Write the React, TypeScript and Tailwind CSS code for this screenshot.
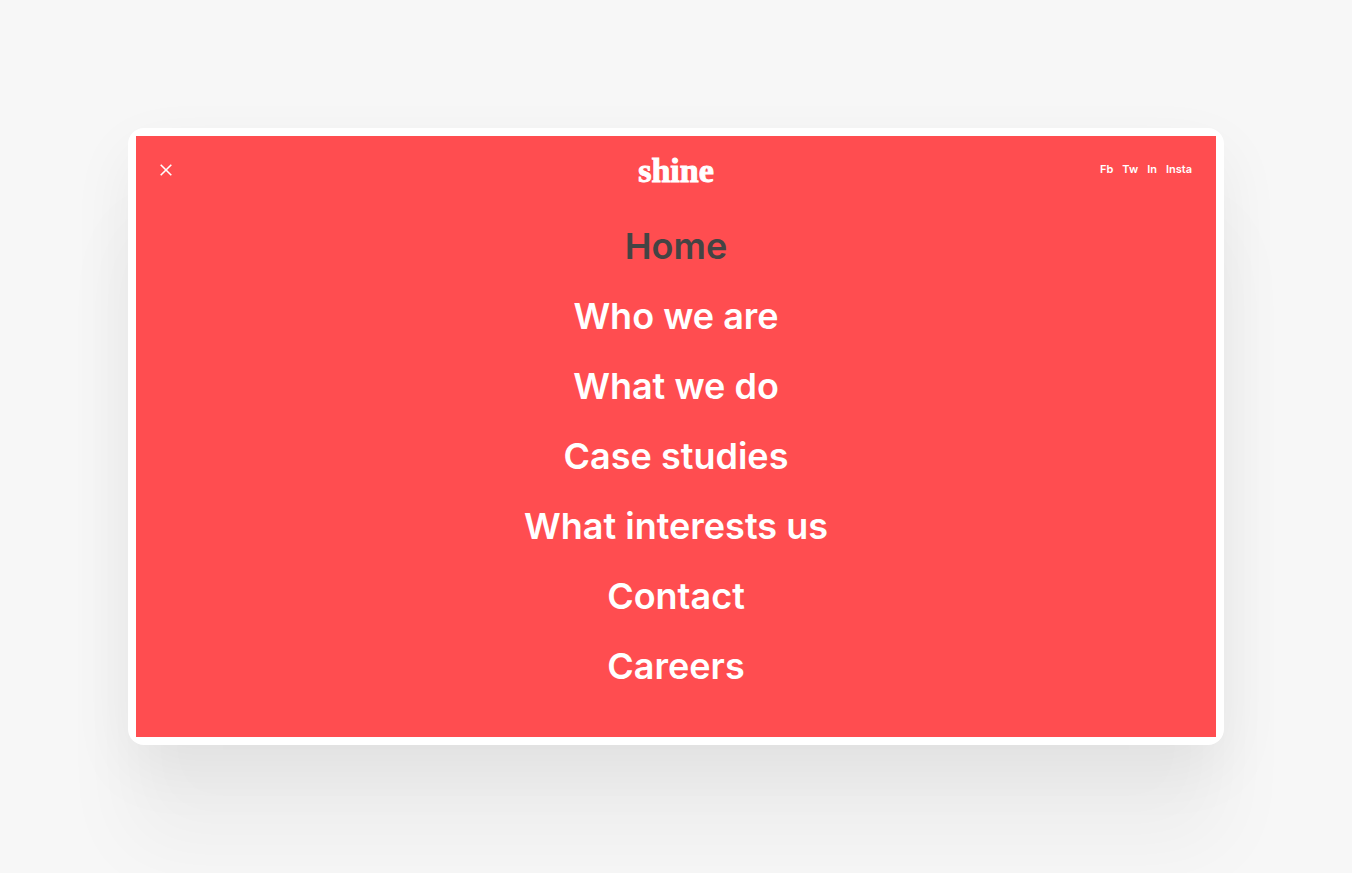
const NAV_LINKS = [
  { label: "Home", href: "#home", active: true },
  { label: "Who we are", href: "#who-we-are" },
  { label: "What we do", href: "#what-we-do" },
  { label: "Case studies", href: "#case-studies" },
  { label: "What interests us", href: "#interests" },
  { label: "Contact", href: "#contact" },
  { label: "Careers", href: "#careers" },
];

const SOCIAL_LINKS = ["Fb", "Tw", "In", "Insta"];

function CloseIcon() {
  return (
    <svg width="12" height="12" viewBox="0 0 12 12" fill="none" stroke="currentColor" strokeWidth="1.6" aria-hidden="true">
      <path d="M.7 .7l10.6 10.6M11.3 .7L.7 11.3" />
    </svg>
  );
}

function MenuHeader() {
  return (
    <header className="grid grid-cols-3 items-center px-6 pt-[15px]">
      <button type="button" aria-label="Close menu" className="justify-self-start pb-0.5 text-white">
        <CloseIcon />
      </button>
      <a
        href="#home"
        className="justify-self-center font-['Liberation_Serif',serif] text-[34px] leading-10 font-bold text-white [-webkit-text-stroke:1px_white]"
      >
        shine
      </a>
      <ul className="flex gap-[9px] justify-self-end pb-1 text-[11px] leading-4 font-semibold text-white">
        {SOCIAL_LINKS.map((label) => (
          <li key={label}>
            <a href={`#${label.toLowerCase()}`}>{label}</a>
          </li>
        ))}
      </ul>
    </header>
  );
}

export default function App() {
  return (
    <main className="min-h-screen bg-[#f7f7f7] p-32 font-['Inter',sans-serif]">
      <div className="rounded-2xl bg-white p-2 shadow-[0_100px_80px_rgba(0,0,0,0.04),0_24px_64px_rgba(0,0,0,0.06)]">
        <div className="bg-[#ff4d50] pb-9">
          <MenuHeader />
          <nav className="pt-5">
            <ul className="text-center text-4xl font-semibold">
              {NAV_LINKS.map((link) => (
                <li key={link.label} className="py-[15px]">
                  <a href={link.href} className={link.active ? "text-[#444444]" : "text-white"}>
                    {link.label}
                  </a>
                </li>
              ))}
            </ul>
          </nav>
        </div>
      </div>
    </main>
  );
}
